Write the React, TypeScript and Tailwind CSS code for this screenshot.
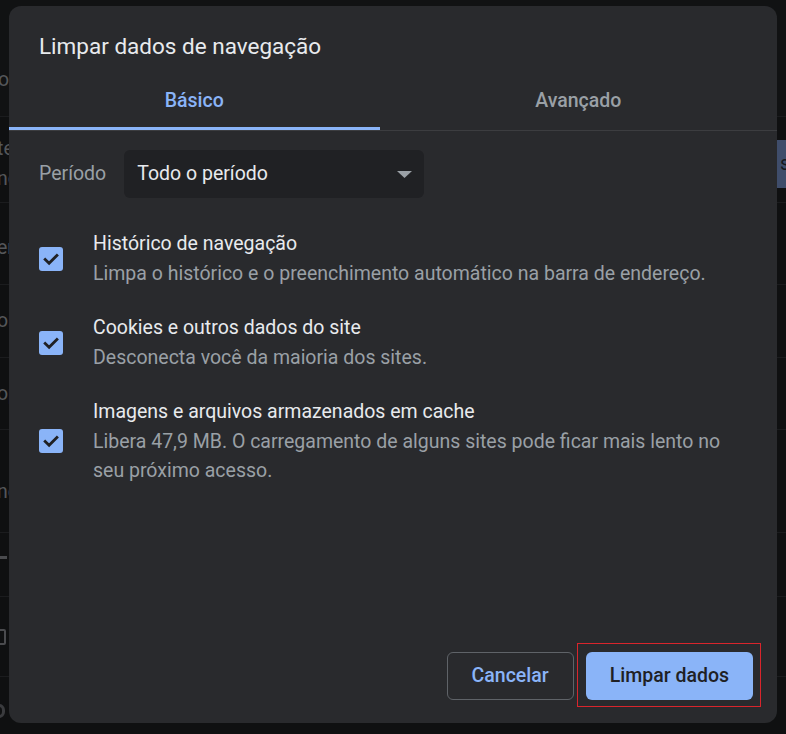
import React from "react";

function Check() {
  return (
    <div className="w-[24px] h-[24px] shrink-0 rounded-[3px] bg-[#8ab4f8] flex items-center justify-center">
      <svg width="24" height="24" viewBox="0 0 24 24" fill="none">
        <path d="M6.2 12.4 L10.1 16.2 L17.9 8.4" stroke="#202124" strokeWidth="2.8" strokeLinecap="square" strokeLinejoin="miter" />
      </svg>
    </div>
  );
}

function Item({ title, children }: { title: string; children: React.ReactNode }) {
  return (
    <div className="flex items-center gap-[30px]">
      <Check />
      <div className="flex flex-col leading-[29.5px] text-[19.5px]">
        <span className="text-[#e8eaed]">{title}</span>
        <span className="text-[#9aa0a6]">{children}</span>
      </div>
    </div>
  );
}

export default function App() {
  return (
    <div
      className="relative w-[786px] h-[734px] overflow-hidden bg-[#0f1011]"
      style={{ fontFamily: "Roboto, 'Noto Sans', 'Liberation Sans', sans-serif" }}
    >
      {/* dimmed page behind the dialog */}
      <div className="flex flex-col text-[19.5px] text-[#55575a] leading-[30px]">
        <div className="h-[117px] flex items-start pt-[65px] border-b border-[#1b1c1e] bg-[#111213]">
          <span className="-ml-[2px]">o</span>
        </div>
        <div className="h-[86px] flex items-center justify-between border-b border-[#1b1c1e]">
          <div className="flex flex-col -ml-[3px] pt-[8px]">
            <span>te</span>
            <span>nc</span>
          </div>
          <div className="w-[80px] h-[48px] -mr-[71px] mt-[8px] bg-[#3f4d6b] text-[#16181c] flex items-center pl-[3px]">
            si
          </div>
        </div>
        <div className="h-[82px] flex items-center border-b border-[#1b1c1e]">
          <span className="-ml-[3px] pt-[8px]">er</span>
        </div>
        <div className="h-[73px] flex items-center border-b border-[#1b1c1e]">
          <span className="-ml-[3px]">or</span>
        </div>
        <div className="h-[72px] flex items-center border-b border-[#1b1c1e]">
          <span className="-ml-[3px]">op</span>
        </div>
        <div className="h-[103px] flex items-center border-b border-[#1b1c1e]">
          <span className="-ml-[3px] pt-[22px]">ne</span>
        </div>
        <div className="h-[64px] flex items-center border-b border-[#1b1c1e]">
          <div className="w-[7px] h-[3px] bg-[#4a4b4e] -mt-[14px]" />
        </div>
        <div className="h-[80px] flex items-center border-b border-[#1b1c1e]">
          <div className="w-[12px] h-[16px] -ml-[6px] rounded-[2px] border-2 border-[#4a4b4e]" />
        </div>
        <div className="h-[60px] flex items-center">
          <div className="w-[12px] h-[14px] -ml-[7px] mt-[8px] rounded-full border-[3px] border-[#3a3b3e]" />
        </div>
      </div>

      {/* dialog */}
      <div className="absolute left-[9px] top-[6px] w-[768px] h-[717px] rounded-[12px] bg-[#292a2d] flex flex-col">
        <div className="pt-[25px] px-[30px] text-[22.5px] leading-[30px] text-[#e8eaed]">
          Limpar dados de navegação
        </div>

        <div className="mt-[9px] flex border-b border-[#3c3d40] text-[19.5px] font-medium">
          <div className="flex-auto h-[60px] flex flex-col">
            <div className="flex-1 flex items-center justify-center text-[#8ab4f8] pt-[4px]">Básico</div>
            <div className="h-[3px] bg-[#8ab4f8]" />
          </div>
          <div className="flex-auto h-[60px] flex flex-col">
            <div className="flex-1 flex items-center justify-center text-[#9aa0a6] pt-[4px]">Avançado</div>
            <div className="h-[3px]" />
          </div>
        </div>

        <div className="px-[30px]">
          <div className="mt-[19px] flex items-center gap-[18px] text-[19.5px]">
            <span className="text-[#9aa0a6]">Período</span>
            <div className="w-[300px] h-[48px] rounded-[6px] bg-[#202124] flex items-center justify-between pl-[13px] pr-[12px] text-[#e8eaed]">
              <span>Todo o período</span>
              <svg width="15" height="7" viewBox="0 0 15 7">
                <path d="M0 0 H15 L7.5 7 Z" fill="#9aa0a6" />
              </svg>
            </div>
          </div>

          <div className="mt-[31px] flex flex-col gap-[25px]">
            <Item title="Histórico de navegação">
              Limpa o histórico e o preenchimento automático na barra de endereço.
            </Item>
            <Item title="Cookies e outros dados do site">Desconecta você da maioria dos sites.</Item>
            <Item title="Imagens e arquivos armazenados em cache">
              Libera 47,9 MB. O carregamento de alguns sites pode ficar mais lento no
              <br />
              seu próximo acesso.
            </Item>
          </div>
        </div>

        <div className="mt-auto flex justify-end gap-[12px] pr-[24px] pb-[23px] text-[19.5px] font-medium">
          <button className="h-[48px] px-[24px] rounded-[6px] border border-[#5f6368] text-[#8ab4f8]">
            Cancelar
          </button>
          <div className="relative">
            <button className="h-[48px] px-[24px] rounded-[6px] bg-[#8ab4f8] text-[#202124]">
              Limpar dados
            </button>
            <span className="absolute -left-[9px] -right-[8px] -top-[9px] -bottom-[7px] border border-[#d9252c] pointer-events-none" />
          </div>
        </div>
      </div>
    </div>
  );
}
